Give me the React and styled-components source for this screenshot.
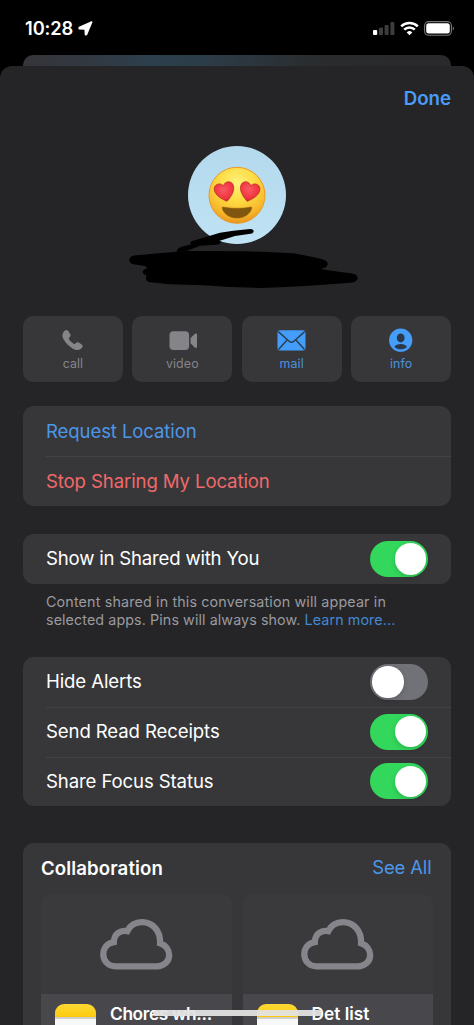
import React, { useState } from "react";
import styled, { createGlobalStyle } from "styled-components";

const GlobalStyle = createGlobalStyle`
  * {
    box-sizing: border-box;
  }

  body {
    margin: 0;
    background: #000;
    font-family: Inter, "Liberation Sans", sans-serif;
    color: #fff;
  }

  button {
    font: inherit;
    border: none;
    padding: 0;
    background: none;
    color: inherit;
  }
`;

const Screen = styled.div`
  position: relative;
  display: flex;
  flex-direction: column;
  width: 474px;
  height: 1025px;
  overflow: hidden;
  background: #000;
`;

const StatusBar = styled.header`
  display: flex;
  justify-content: space-between;
  height: 55px;
  padding: 18px 19px 0 25px;
  flex-shrink: 0;
`;

const Clock = styled.div`
  display: flex;
  align-items: center;
  gap: 5px;
  height: 21px;
  font-size: 18.3px;
  font-weight: 600;
  letter-spacing: -0.1px;
`;

const Time = styled.span`
  padding-bottom: 1px;
`;

const StatusIcons = styled.div`
  display: flex;
  align-items: center;
  gap: 5px;
  height: 21px;
`;

const BackSheet = styled.div`
  height: 11px;
  margin: 0 23px;
  flex-shrink: 0;
  border-radius: 10px 10px 0 0;
  background: linear-gradient(
    90deg,
    #35353a 0%,
    #323840 14%,
    #2d3e4c 28%,
    #2c3d4a 42%,
    #2b343a 56%,
    #2a2b2d 70%,
    #2a2a2c 100%
  );
`;

const Sheet = styled.main`
  display: flex;
  flex-direction: column;
  flex: 1;
  min-height: 0;
  padding: 0 23px;
  border-radius: 12px 12px 0 0;
  background: #252527;
`;

const TopRow = styled.div`
  display: flex;
  justify-content: flex-end;
  align-items: center;
  height: 80px;
  padding-bottom: 15px;
`;

const DoneButton = styled.button`
  color: #4a9cf8;
  font-size: 18.7px;
  font-weight: 600;
`;

const Profile = styled.div`
  position: relative;
  display: flex;
  justify-content: center;
  height: 169.5px;
`;

const Avatar = styled.div`
  display: flex;
  align-items: center;
  justify-content: center;
  width: 98px;
  height: 98px;
  border-radius: 50%;
  background: linear-gradient(180deg, #b4d9ed, #bfe3f4);
`;

const Scribble = styled.svg`
  position: absolute;
  top: -11px;
  left: 97px;
`;

const Actions = styled.div`
  display: grid;
  grid-template-columns: repeat(4, 1fr);
  gap: 9.5px;
  height: 66.5px;
  margin-bottom: 24px;
`;

const ActionButton = styled.button`
  display: flex;
  flex-direction: column;
  align-items: center;
  padding-top: 11px;
  border-radius: 10px;
  background: #373739;
  color: ${(props) => (props.$active ? "#449df9" : "#848489")};

  svg {
    height: 28px;
  }
`;

const ActionLabel = styled.span`
  font-size: 12.4px;
  line-height: 16px;
  margin-top: 1px;
  letter-spacing: 0.1px;
  color: ${(props) => (props.$active ? "#4c92de" : "#848489")};
`;

const Group = styled.section`
  border-radius: 11px;
  background: #373739;
  padding-left: 23px;
  margin-bottom: ${(props) => props.$gap};
`;

const Row = styled.div`
  display: flex;
  align-items: center;
  justify-content: space-between;
  height: ${(props) => props.$height || "49.7px"};
  padding-right: 23px;
  font-size: 18.6px;
  letter-spacing: ${(props) => props.$spacing || "-0.12px"};
  color: ${(props) => props.$color || "#fff"};

  & + & {
    border-top: 1px solid #434346;
  }
`;

const RowLabel = styled.span`
  padding-bottom: ${(props) => props.$lift || "2px"};
`;

const Track = styled.button`
  display: flex;
  align-items: center;
  justify-content: ${(props) => (props.$on ? "flex-end" : "flex-start")};
  width: 58px;
  height: 36px;
  padding: 0 2px;
  border-radius: 18px;
  background: ${(props) => (props.$on ? "#32d75b" : "#717178")};

  ${Row} + ${Row} & {
    margin-bottom: 1px;
  }
`;

const Knob = styled.span`
  width: 31.5px;
  height: 31.5px;
  border-radius: 50%;
  background: #fff;
  box-shadow: 0 2px 5px rgba(0, 0, 0, 0.16);
`;

const Note = styled.p`
  height: 73.5px;
  margin: 0;
  padding: 9px 0 0 23px;
  font-size: 14.3px;
  line-height: 18.2px;
  color: #9a9a9f;
  white-space: nowrap;
`;

const NoteLine = styled.span`
  display: block;
  letter-spacing: ${(props) => props.$spacing};
`;

const Link = styled.span`
  color: #4388d4;
`;

const Collaboration = styled.section`
  flex: 1;
  min-height: 0;
  padding: 0 18px;
  border-radius: 11px 11px 0 0;
  background: #373739;
`;

const CollaborationHeader = styled.div`
  display: flex;
  align-items: center;
  justify-content: space-between;
  height: 51px;
`;

const Title = styled.h2`
  margin: -2px 0 0;
  font-size: 18.6px;
  font-weight: 600;
  letter-spacing: 0.13px;
`;

const SeeAll = styled.button`
  color: #4c96e8;
  font-size: 18.4px;
  letter-spacing: -0.1px;
  margin: -4px 1.5px 0 0;
`;

const Tiles = styled.div`
  display: grid;
  grid-template-columns: 1fr 1fr;
  gap: 11px;
`;

const Tile = styled.article`
  border-radius: 9px;
  overflow: hidden;
  background: #3a3a3d;
`;

const Preview = styled.div`
  display: flex;
  align-items: center;
  justify-content: center;
  height: 100px;
`;

const TileFooter = styled.div`
  display: flex;
  gap: 14px;
  height: 60px;
  padding: 10px 14px;
  background: #48484c;
`;

const NotesIcon = styled.div`
  width: 41px;
  height: 41px;
  flex-shrink: 0;
  border-radius: 9px;
  background: linear-gradient(
    180deg,
    #fdd835 0,
    #fccb0f 13px,
    #c9c5b8 13px,
    #d8d8d8 15px,
    #f8f8f8 15px
  );
`;

const TileName = styled.span`
  font-size: 17.3px;
  font-weight: 600;
  line-height: 20px;
  letter-spacing: ${(props) => props.$spacing || "0"};
  white-space: nowrap;
`;

const HomeIndicator = styled.div`
  position: absolute;
  left: 153px;
  top: 1010px;
  width: 169px;
  height: 6px;
  border-radius: 3px;
  background: rgba(226, 226, 226, 0.94);
`;

function LocationArrow() {
  return (
    <svg width="15" height="15" viewBox="0 0 15 15">
      <path
        d="M13.7 1 8.5 13.5 7.5 13.7 7.2 7.9 1.2 7.6 1.3 6.6Z"
        fill="#fff"
        stroke="#fff"
        strokeWidth="1.6"
        strokeLinejoin="round"
      />
    </svg>
  );
}

function Signal() {
  return (
    <svg width="22" height="15" viewBox="0 0 22 15">
      <rect x="0" y="9" width="4.2" height="5" rx="1" fill="#fff" />
      <rect x="6" y="6.6" width="4" height="7.4" rx="1" fill="#3d3d3d" />
      <rect x="11.6" y="4" width="4" height="10" rx="1" fill="#3d3d3d" />
      <rect x="17.4" y="1" width="4" height="13" rx="1" fill="#3d3d3d" />
    </svg>
  );
}

function Wifi() {
  return (
    <svg width="19" height="15" viewBox="0 0 19 15">
      <g fill="none" stroke="#fff" strokeWidth="2.5">
        <path d="M1.2 5.4a11.8 11.8 0 0 1 16.6 0" />
        <path d="M4.2 8.6a7.5 7.5 0 0 1 10.6 0" />
      </g>
      <path d="M9.5 14.2 6.7 11.4a4 4 0 0 1 5.6 0Z" fill="#fff" />
    </svg>
  );
}

function Battery() {
  return (
    <svg width="31" height="15" viewBox="0 0 31 15">
      <rect
        x=".6"
        y=".6"
        width="26.8"
        height="13.6"
        rx="4"
        fill="none"
        stroke="#777"
        strokeWidth="1.1"
      />
      <rect x="2.2" y="2.2" width="23.6" height="10.4" rx="2.5" fill="#fff" />
      <path d="M28.8 5.2c1.6.7 1.6 3.7 0 4.4Z" fill="#777" />
    </svg>
  );
}

function HeartEyes() {
  const heart =
    "M0 10.2C-5.2 6.5-9.8 2-9.8-3.4c0-5.4 6.9-7.4 9.8-2.3C2.9-10.8 9.8-8.8 9.8-3.4 9.8 2 5.2 6.5 0 10.2Z";
  return (
    <svg width="58" height="58" viewBox="0 0 58 58">
      <defs>
        <radialGradient id="face" cx=".5" cy=".28" r=".72">
          <stop offset="0" stopColor="#fff27c" />
          <stop offset=".45" stopColor="#fddb43" />
          <stop offset=".82" stopColor="#f7b72b" />
          <stop offset="1" stopColor="#e8951d" />
        </radialGradient>
        <radialGradient id="heart" cx=".45" cy=".35" r=".65">
          <stop offset="0" stopColor="#fb5962" />
          <stop offset=".75" stopColor="#ee3440" />
          <stop offset="1" stopColor="#c9232f" />
        </radialGradient>
      </defs>
      <circle cx="29" cy="29.3" r="28" fill="url(#face)" stroke="#e99b25" />
      <g fill="url(#heart)" stroke="#bd2b22" strokeWidth=".7">
        <path d={heart} transform="translate(16.7 25.4) rotate(-13)" />
        <path d={heart} transform="translate(41.5 25.4) rotate(13)" />
      </g>
      <path
        d="M15.2 41c9 1.8 18.6 1.8 27.6 0 .8-.1 1.2.4 1 1.2-1.4 6-7.8 9.9-14.8 9.9s-13.4-3.9-14.8-9.9c-.2-.8.2-1.3 1-1.2Z"
        fill="#80550d"
        stroke="#a56b12"
        strokeWidth=".6"
      />
    </svg>
  );
}

function PhoneIcon() {
  return (
    <svg width="28" height="28" viewBox="0 0 28 28">
      <path
        d="M5.7 3.7c1.1-1.1 2.7-1 3.5.3l2 3c.7 1 .5 2-.4 2.9l-.9 1c-.3.4-.3.7 0 1.1 1.2 1.9 2.9 3.6 4.9 4.8.4.3.8.3 1.1 0l1-.9c.8-.9 1.9-1 2.9-.3l2.9 2c1.3.8 1.3 2.3.2 3.5-2.5 2.7-6.1 2.5-10.1-.1-3-1.9-5.9-4.8-7.8-7.9C2.8 9.4 2.9 6.3 5.7 3.7Z"
        fill="currentColor"
      />
    </svg>
  );
}

function VideoIcon() {
  return (
    <svg width="30" height="28" viewBox="0 0 30 28">
      <rect x="2.5" y="4.3" width="19.6" height="18.6" rx="4" fill="currentColor" />
      <path
        d="M23.5 11 27.7 6.9c.9-.9 2.3-.5 2.3.7v12.1c0 1.2-1.4 1.6-2.3.7L23.5 16.3Z"
        fill="currentColor"
      />
    </svg>
  );
}

function MailIcon() {
  return (
    <svg width="30" height="28" viewBox="0 0 30 28">
      <rect x=".5" y="3.3" width="28" height="20.2" rx="2.5" fill="currentColor" />
      <g fill="none" stroke="#2b3f57" strokeWidth="1.5">
        <path d="m1.3 4.6 10.8 9.7c1.5 1.3 3.3 1.3 4.8 0L27.7 4.6" />
        <path d="m1.5 22.4 8.8-9.6M27.5 22.4l-8.8-9.6" />
      </g>
    </svg>
  );
}

function InfoIcon() {
  return (
    <svg width="28" height="28" viewBox="0 0 28 28">
      <circle cx="13.7" cy="13.2" r="11.6" fill="currentColor" />
      <ellipse cx="13.7" cy="10.9" rx="3.9" ry="4.5" fill="#2b3849" />
      <path
        d="M7.4 20c1-2 3.3-3.1 6.3-3.1s5.3 1.1 6.3 3.1c-1.7 1.6-3.8 2.3-6.3 2.3s-4.600-.7-6.3-2.3Z"
        fill="#2b3849"
      />
    </svg>
  );
}

function CloudIcon() {
  return (
    <svg width="73" height="51" viewBox="0 0 73 51">
      <path
        d="M15.5 47.3H57c7 0 12.2-5 12.2-11.3 0-5.3-3.7-9.9-9.1-11.8C60.5 11.5 52.5 3.2 42 3.2c-6.5 0-12 3.5-14.7 8.9-7-1.5-13.2 3-13.5 11C7.2 24.2 3.3 29.2 3.3 35.2c0 7 5.2 12.1 12.2 12.1Z"
        fill="none"
        stroke="#85858b"
        strokeWidth="6.3"
        strokeLinejoin="miter"
      />
    </svg>
  );
}

function Toggle({ defaultOn = false, label }) {
  const [on, setOn] = useState(defaultOn);

  return (
    <Track
      $on={on}
      role="switch"
      aria-checked={on}
      aria-label={label}
      onClick={() => setOn((value) => !value)}
    >
      <Knob />
    </Track>
  );
}

function CollaborationTile({ name, spacing }) {
  return (
    <Tile>
      <Preview>
        <CloudIcon />
      </Preview>
      <TileFooter>
        <NotesIcon />
        <TileName $spacing={spacing}>{name}</TileName>
      </TileFooter>
    </Tile>
  );
}

const actions = [
  { label: "call", Icon: PhoneIcon },
  { label: "video", Icon: VideoIcon },
  { label: "mail", Icon: MailIcon, active: true },
  { label: "info", Icon: InfoIcon, active: true },
];

export default function App() {
  return (
    <>
      <GlobalStyle />
      <Screen>
        <StatusBar>
          <Clock>
            <Time>10:28</Time>
            <LocationArrow />
          </Clock>
          <StatusIcons>
            <Signal />
            <Wifi />
            <Battery />
          </StatusIcons>
        </StatusBar>

        <BackSheet />
        <Sheet>
          <TopRow>
            <DoneButton>Done</DoneButton>
          </TopRow>

          <Profile>
            <Avatar>
              <HeartEyes />
            </Avatar>
            <Scribble width="250" height="165" viewBox="0 0 750 495">
              <path d="M28 375c0-10 12-14 24-14l48-5 70-6 35-2 170 1 65 2 80 4 40 7 45 10c12 4 18 8 18 14 0 8-8 14-23 16l40 6 50 7c16 2 23 6 23 14s-8 13-23 14l-90 7-100 6-80 3-90-3-80-5-100-3-60-6c-12-2-15-12-10-22-14 0-16-14-4-18l6-2-7-7-35-5c-8-2-12-7-12-13Z" />
              <path d="M170 352c0-10 8-15 15-17l30-7c-8-2-6-8 10-12l40-12 35-11 40-6 50-5c14-1 15 13 2 14l-47 7-48 15c10 2 6 10-7 11l-50 3-40 16Z" />
            </Scribble>
          </Profile>

          <Actions>
            {actions.map(({ label, Icon, active }) => (
              <ActionButton key={label} $active={active}>
                <Icon />
                <ActionLabel $active={active}>{label}</ActionLabel>
              </ActionButton>
            ))}
          </Actions>

          <Group $gap="28px">
            <Row $height="50px" $color="#4c96e8">
              <RowLabel $lift="0">Request Location</RowLabel>
            </Row>
            <Row $height="50px" $color="#f0696a">
              <RowLabel>Stop Sharing My Location</RowLabel>
            </Row>
          </Group>

          <Group $gap="0">
            <Row $spacing="-0.2px">
              <RowLabel>Show in Shared with You</RowLabel>
              <Toggle defaultOn label="Show in Shared with You" />
            </Row>
          </Group>
          <Note>
            <NoteLine $spacing="0.15px">
              Content shared in this conversation will appear in
            </NoteLine>
            <NoteLine $spacing="0.09px">
              selected apps. Pins will always show. <Link>Learn more...</Link>
            </NoteLine>
          </Note>

          <Group $gap="37px">
            <Row>
              <RowLabel>Hide Alerts</RowLabel>
              <Toggle label="Hide Alerts" />
            </Row>
            <Row>
              <RowLabel>Send Read Receipts</RowLabel>
              <Toggle defaultOn label="Send Read Receipts" />
            </Row>
            <Row>
              <RowLabel>Share Focus Status</RowLabel>
              <Toggle defaultOn label="Share Focus Status" />
            </Row>
          </Group>

          <Collaboration>
            <CollaborationHeader>
              <Title>Collaboration</Title>
              <SeeAll>See All</SeeAll>
            </CollaborationHeader>
            <Tiles>
              <CollaborationTile name="Chores wh..." spacing="-0.35px" />
              <CollaborationTile name="Det list" />
            </Tiles>
          </Collaboration>
        </Sheet>
        <HomeIndicator />
      </Screen>
    </>
  );
}
